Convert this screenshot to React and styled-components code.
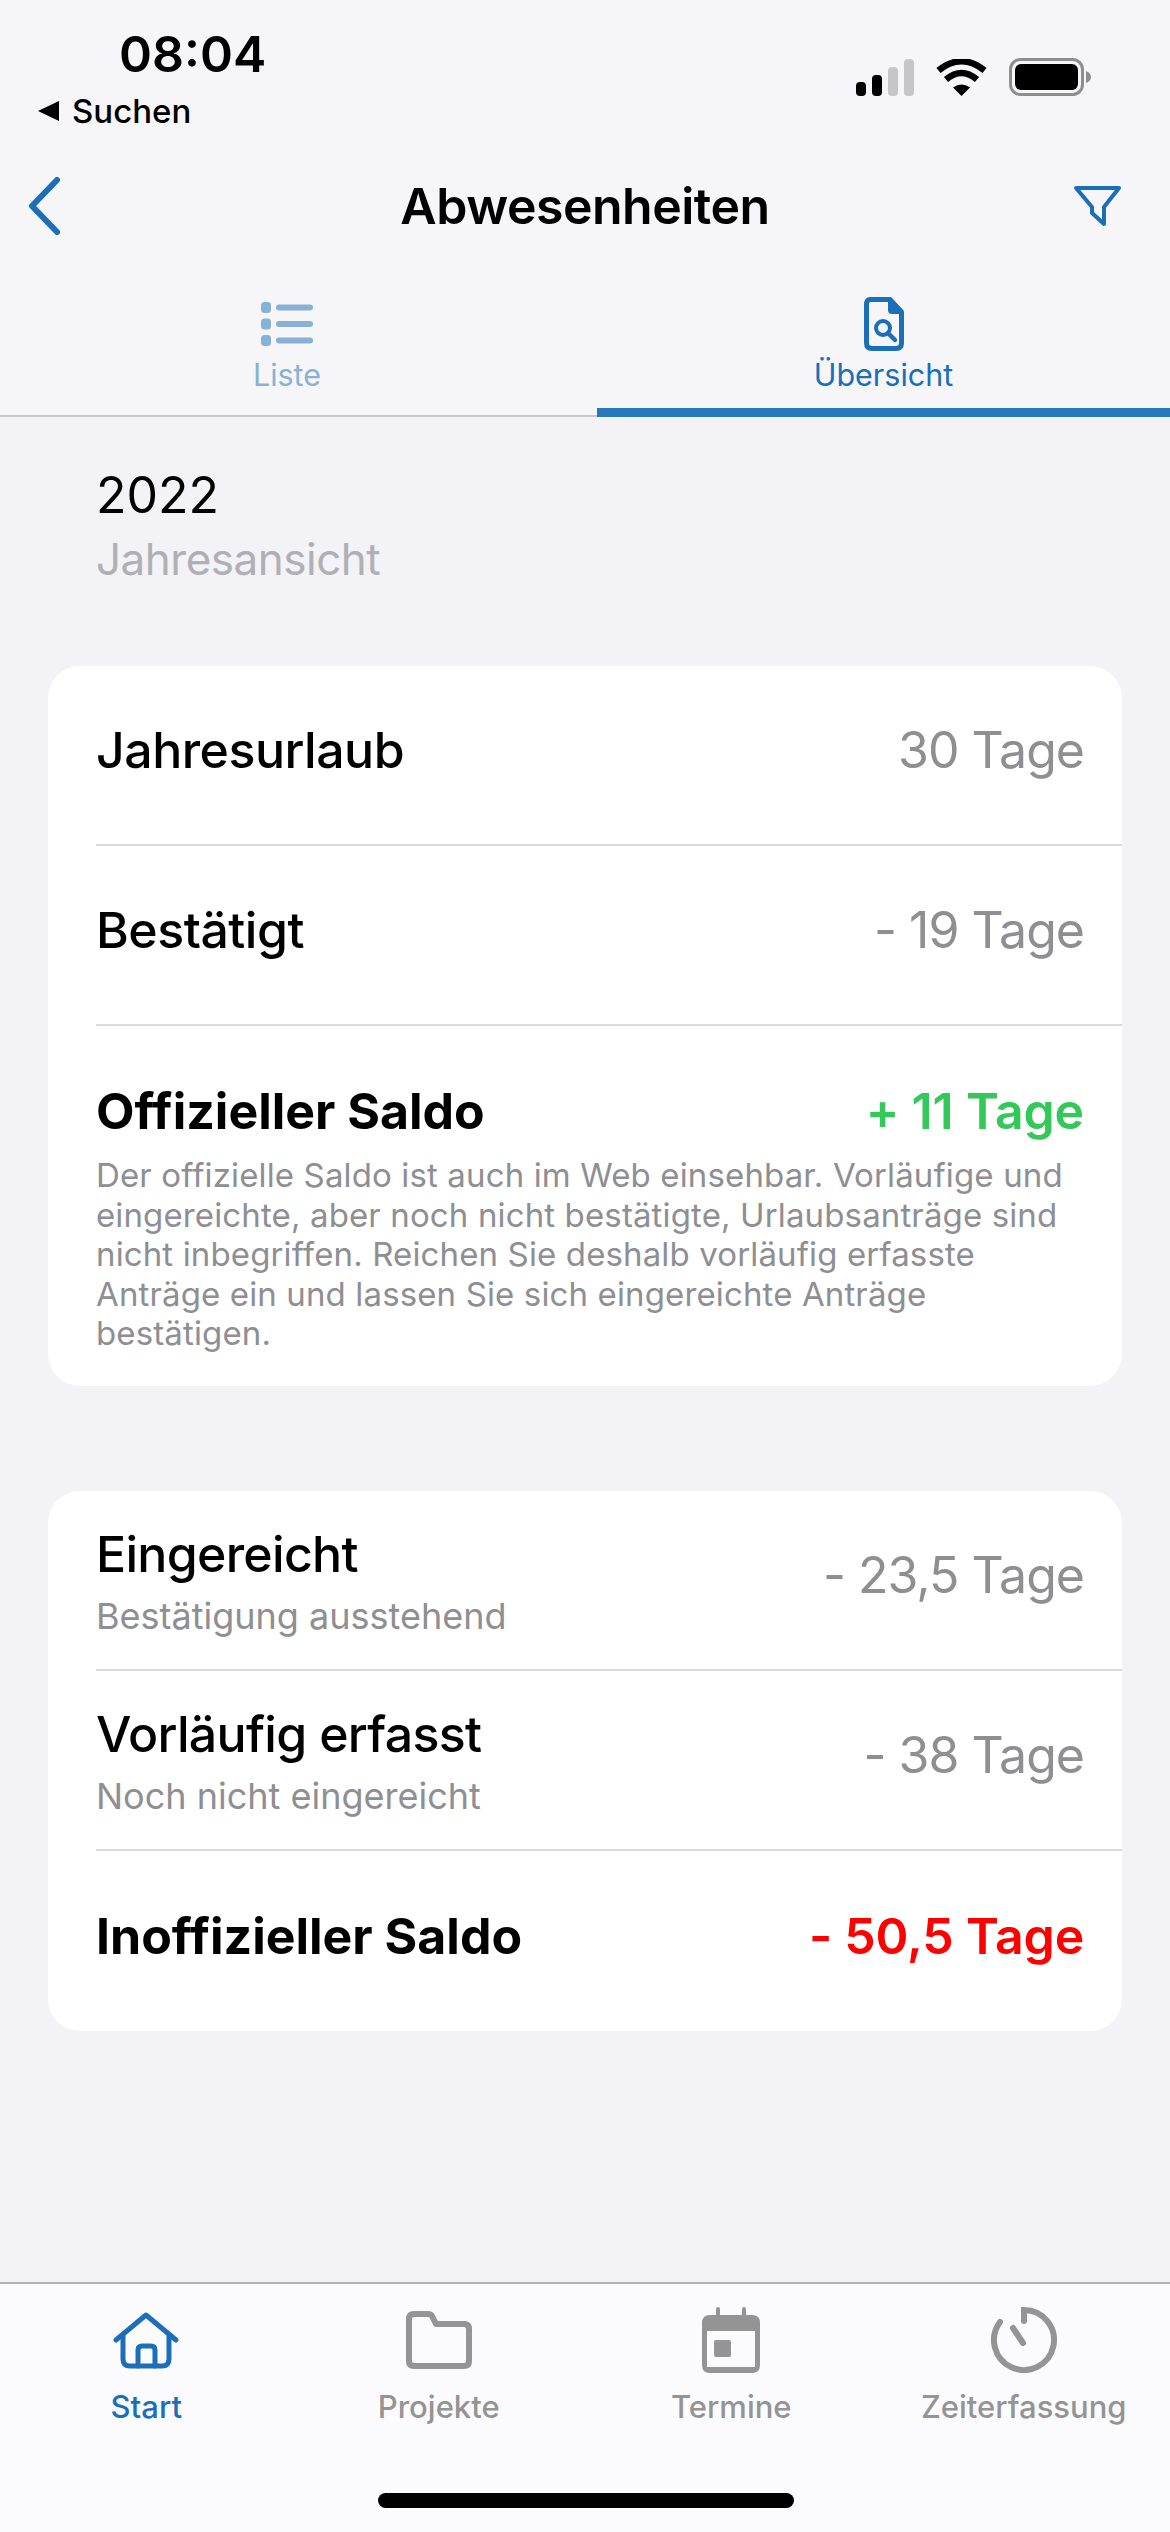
import React from 'react';
import styled, { createGlobalStyle } from 'styled-components';

const GlobalStyle = createGlobalStyle`
    html, body {
        margin: 0;
        padding: 0;
        background: #f2f2f7;
        font-family: Inter, "Liberation Sans", sans-serif;
        color: #000;
    }
`

const Screen = styled.div`
    width: 1170px;
    height: 2532px;
    display: flex;
    flex-direction: column;
    overflow: hidden;
`

const Header = styled.header`
    background: #f6f6f8;
`

const StatusBar = styled.div`
    height: 150px;
    box-sizing: border-box;
    display: flex;
    justify-content: space-between;
    padding: 26px 79px 0 38px;
`

const StatusLeft = styled.div`
    display: flex;
    flex-direction: column;
`

const Time = styled.div`
    font-size: 50px;
    font-weight: 600;
    line-height: 56px;
    margin-left: 81px;
`

const BackLink = styled.div`
    display: flex;
    align-items: center;
    gap: 12px;
    font-size: 33px;
    font-weight: 500;
    line-height: 44px;
    margin-top: 7px;
`

const StatusIcons = styled.div`
    display: flex;
    align-items: center;
    gap: 22px;
    height: 38px;
    margin-top: 32px;
`

const NavBar = styled.div`
    height: 112px;
    display: grid;
    grid-template-columns: 1fr auto 1fr;
    align-items: center;
    padding: 0 48px 0 28px;

    svg:last-child {
        justify-self: end;
    }
`

const NavTitle = styled.h1`
    margin: 0 0 0 20px;
    font-size: 50px;
    font-weight: 600;
    letter-spacing: -0.5px;
`

const Tabs = styled.div`
    display: flex;
    justify-content: space-between;
    height: 155px;
    box-sizing: border-box;
    border-bottom: 2px solid #c8c8cc;
`

const Tab = styled.div`
    width: ${p => (p.$active ? '573px' : '574px')};
    height: 155px;
    box-sizing: border-box;
    display: flex;
    flex-direction: column;
    align-items: center;
    padding-top: 35px;
    color: #1a6fb8;
    border-bottom: ${p => (p.$active ? '9px solid #2878bd' : 'none')};
    & > * {
        opacity: ${p => (p.$active ? 1 : 0.5)};
    }
`

const TabIcon = styled.div`
    height: 54px;
    display: flex;
    align-items: center;
`

const TabLabel = styled.div`
    font-size: 30.5px;
    line-height: 40px;
    margin-top: 4px;
`

const Content = styled.main`
    flex: 1;
    display: flex;
    flex-direction: column;
`

const YearBlock = styled.div`
    padding: 46px 0 0 96px;
`

const Year = styled.div`
    font-size: 50px;
    line-height: 64px;
`

const YearSub = styled.div`
    font-size: 44px;
    line-height: 64px;
    letter-spacing: -0.5px;
    color: #b0b0b4;
`

const Card = styled.section`
    margin: ${p => p.$top}px 48px 0;
    background: #fff;
    border-radius: 32px;
    padding-left: 48px;
`

const Row = styled.div`
    height: ${p => p.$height || 180}px;
    box-sizing: border-box;
    display: flex;
    align-items: center;
    justify-content: space-between;
    padding: 0 38px 10px 0;
    border-bottom: ${p => (p.$last ? 'none' : '2px solid #d9d9dc')};
`

const SaldoHead = styled(Row)`
    height: auto;
    padding: 0 38px 0 0;
    border-bottom: none;
`

const SaldoBlock = styled.div`
    padding: 48px 0 32px;
`

const RowLabel = styled.div`
    font-size: 50px;
    line-height: 74px;
    font-weight: ${p => (p.$strong ? 700 : 500)};
    letter-spacing: ${p => (p.$strong ? '0' : '-0.5px')};
`

const LabelBlock = styled.div`
    margin-top: 8px;
`

const TitleLabel = styled.div`
    font-size: 50px;
    line-height: 62px;
    font-weight: 500;
    letter-spacing: -0.7px;
`

const SubLabel = styled.div`
    font-size: 36px;
    line-height: 38px;
    margin-top: 12px;
    color: #8e8e93;
`

const RowValue = styled.div`
    font-size: 50px;
    font-weight: ${p => (p.$strong ? 600 : 400)};
    letter-spacing: ${p => (p.$strong ? '-0.2px' : '-1px')};
    color: ${p => p.$color || '#8e8e93'};
`

const Note = styled.p`
    margin: 8px 38px 0 0;
    font-size: 33px;
    line-height: 39.5px;
    letter-spacing: 0.13px;
    color: #8e8e93;
`

const BottomBar = styled.nav`
    height: 250px;
    box-sizing: border-box;
    border-top: 2px solid #b2b2b6;
    background: #fbfbfd;
    display: grid;
    grid-template-columns: repeat(4, 1fr);
    position: relative;
`

const BarItem = styled.div`
    display: flex;
    flex-direction: column;
    align-items: center;
    padding-top: 23px;
    color: ${p => (p.$active ? '#1a6fb8' : '#949494')};
`

const BarIcon = styled.div`
    height: 66px;
    display: flex;
    align-items: center;
`

const BarLabel = styled.div`
    font-size: 31px;
    font-weight: 500;
    line-height: 40px;
    margin-top: 14px;
`

const HomeIndicator = styled.div`
    position: absolute;
    left: 378px;
    top: 209px;
    width: 416px;
    height: 15px;
    border-radius: 8px;
    background: #000;
`

const SignalIcon = () => (
    <svg width="58" height="37" viewBox="0 0 58 37">
        <rect x="0" y="23" width="10" height="14" rx="4" fill="#000" />
        <rect x="16" y="16" width="10" height="21" rx="4" fill="#000" />
        <rect x="32" y="8" width="10" height="29" rx="4" fill="#c6c6c8" />
        <rect x="48" y="0" width="10" height="37" rx="4" fill="#c6c6c8" />
    </svg>
)

const WifiIcon = () => (
    <svg width="51" height="37" viewBox="0 0 51 37">
        <path d="M25.5 37 L17 28.5 Q25.5 22.5 34 28.5 Z" fill="#000" />
        <path d="M10 20.5 Q25.5 7.5 41 20.5" fill="none" stroke="#000" strokeWidth="6.5" />
        <path d="M2.5 11.5 Q25.5 -7 48.5 11.5" fill="none" stroke="#000" strokeWidth="6.5" />
    </svg>
)

const BatteryIcon = () => (
    <svg width="82" height="38" viewBox="0 0 82 38">
        <rect x="1.5" y="1.5" width="72" height="35" rx="10" fill="none" stroke="#8e8e8e" strokeWidth="3" />
        <rect x="6" y="6" width="63" height="26" rx="6" fill="#000" />
        <path d="M77 13 Q82 15 82 19 Q82 23 77 25 Z" fill="#8e8e8e" />
    </svg>
)

const BackTriangle = () => (
    <svg width="22" height="20" viewBox="0 0 22 20">
        <path d="M0 10 L21 0 V20 Z" fill="#000" />
    </svg>
)

const Chevron = () => (
    <svg width="32" height="58" viewBox="0 0 32 58">
        <path d="M29 3 L4 29 L29 55" fill="none" stroke="#1a6fb8" strokeWidth="6" strokeLinecap="round" strokeLinejoin="round" />
    </svg>
)

const FilterIcon = () => (
    <svg width="49" height="42" viewBox="0 0 49 42">
        <path d="M3 3 H46 L31 22 V39 L19 28 V22 Z" fill="none" stroke="#1a6fb8" strokeWidth="4" strokeLinejoin="round" />
    </svg>
)

const ListIcon = () => (
    <svg width="52" height="44" viewBox="0 0 52 44" fill="currentColor">
        <rect x="0" y="0" width="10" height="11" rx="3.5" />
        <rect x="15" y="2.5" width="37" height="6" rx="3" />
        <rect x="0" y="16.5" width="10" height="11" rx="3.5" />
        <rect x="15" y="19" width="37" height="6" rx="3" />
        <rect x="0" y="33" width="10" height="11" rx="3.5" />
        <rect x="15" y="35.5" width="37" height="6" rx="3" />
    </svg>
)

const DocSearchIcon = () => (
    <svg width="40" height="54" viewBox="0 0 40 54">
        <path d="M6 2.5 H26 L37.5 15 V46 Q37.5 51.5 32 51.5 H8 Q2.5 51.5 2.5 46 V8 Q2.5 2.5 6 2.5 Z" fill="none" stroke="currentColor" strokeWidth="5" strokeLinejoin="round" />
        <path d="M24 1 H27 L39 14 V17 H28 Q24 17 24 13 Z" fill="currentColor" />
        <circle cx="19" cy="31" r="7" fill="none" stroke="currentColor" strokeWidth="4" />
        <path d="M24 36 L31 43" fill="none" stroke="currentColor" strokeWidth="4.5" strokeLinecap="round" />
    </svg>
)

const HomeIcon = () => (
    <svg width="66" height="57" viewBox="0 0 66 57">
        <g fill="none" stroke="currentColor" strokeWidth="5" strokeLinecap="round" strokeLinejoin="round">
            <path d="M3 28 L33 3 L63 28" />
            <path d="M10 24 V47 Q10 54 17 54 H49 Q56 54 56 47 V24" />
            <path d="M25 54 V38 Q25 34 29 34 H38 Q42 34 42 38 V54" />
        </g>
    </svg>
)

const FolderIcon = () => (
    <svg width="66" height="58" viewBox="0 0 66 58">
        <path d="M3 8 Q3 3 8 3 H22 Q25 3 26 5 L30 13 H58 Q63 13 63 18 V50 Q63 55 58 55 H8 Q3 55 3 50 Z" fill="none" stroke="currentColor" strokeWidth="6" strokeLinejoin="round" />
    </svg>
)

const CalendarIcon = () => (
    <svg width="58" height="66" viewBox="0 0 58 66">
        <rect x="14" y="0" width="4" height="12" rx="2" fill="currentColor" />
        <rect x="40" y="0" width="4" height="12" rx="2" fill="currentColor" />
        <path d="M8 8 H50 Q58 8 58 16 V58 Q58 66 50 66 H8 Q0 66 0 58 V16 Q0 8 8 8 Z M5 24 V60 H53 V24 Z" fill="currentColor" fillRule="evenodd" />
        <rect x="12" y="33" width="17" height="17" rx="2" fill="currentColor" />
    </svg>
)

const TimerIcon = () => (
    <svg width="66" height="66" viewBox="0 0 66 66">
        <g fill="none" stroke="currentColor" strokeWidth="6" strokeLinecap="round">
            <path d="M33 14 V3 A30 30 0 1 1 9 15" />
            <path d="M22 21 L32 36" />
        </g>
    </svg>
)

const tabs = [
    { label: 'Start', icon: <HomeIcon />, active: true },
    { label: 'Projekte', icon: <FolderIcon /> },
    { label: 'Termine', icon: <CalendarIcon /> },
    { label: 'Zeiterfassung', icon: <TimerIcon /> },
]

const App = () => {
    return (
        <Screen>
            <GlobalStyle />
            <Header>
                <StatusBar>
                    <StatusLeft>
                        <Time>08:04</Time>
                        <BackLink><BackTriangle />Suchen</BackLink>
                    </StatusLeft>
                    <StatusIcons>
                        <SignalIcon />
                        <WifiIcon />
                        <BatteryIcon />
                    </StatusIcons>
                </StatusBar>
                <NavBar>
                    <Chevron />
                    <NavTitle>Abwesenheiten</NavTitle>
                    <FilterIcon />
                </NavBar>
                <Tabs>
                    <Tab>
                        <TabIcon><ListIcon /></TabIcon>
                        <TabLabel>Liste</TabLabel>
                    </Tab>
                    <Tab $active>
                        <TabIcon><DocSearchIcon /></TabIcon>
                        <TabLabel>Übersicht</TabLabel>
                    </Tab>
                </Tabs>
            </Header>
            <Content>
                <YearBlock>
                    <Year>2022</Year>
                    <YearSub>Jahresansicht</YearSub>
                </YearBlock>
                <Card $top={75}>
                    <Row>
                        <RowLabel>Jahresurlaub</RowLabel>
                        <RowValue>30 Tage</RowValue>
                    </Row>
                    <Row>
                        <RowLabel>Bestätigt</RowLabel>
                        <RowValue>- 19 Tage</RowValue>
                    </Row>
                    <SaldoBlock>
                        <SaldoHead as="div">
                            <RowLabel $strong>Offizieller Saldo</RowLabel>
                            <RowValue $strong $color="#34c759">+ 11 Tage</RowValue>
                        </SaldoHead>
                        <Note>
                            Der offizielle Saldo ist auch im Web einsehbar. Vorläufige und<br />
                            eingereichte, aber noch nicht bestätigte, Urlaubsanträge sind<br />
                            nicht inbegriffen. Reichen Sie deshalb vorläufig erfasste<br />
                            Anträge ein und lassen Sie sich eingereichte Anträge<br />
                            bestätigen.
                        </Note>
                    </SaldoBlock>
                </Card>
                <Card $top={105}>
                    <Row>
                        <LabelBlock>
                            <TitleLabel>Eingereicht</TitleLabel>
                            <SubLabel>Bestätigung ausstehend</SubLabel>
                        </LabelBlock>
                        <RowValue>- 23,5 Tage</RowValue>
                    </Row>
                    <Row>
                        <LabelBlock>
                            <TitleLabel>Vorläufig erfasst</TitleLabel>
                            <SubLabel>Noch nicht eingereicht</SubLabel>
                        </LabelBlock>
                        <RowValue>- 38 Tage</RowValue>
                    </Row>
                    <Row $last>
                        <RowLabel $strong>Inoffizieller Saldo</RowLabel>
                        <RowValue $strong $color="#ff0000">- 50,5 Tage</RowValue>
                    </Row>
                </Card>
            </Content>
            <BottomBar>
                {tabs.map(tab => (
                    <BarItem key={tab.label} $active={tab.active}>
                        <BarIcon>{tab.icon}</BarIcon>
                        <BarLabel>{tab.label}</BarLabel>
                    </BarItem>
                ))}
                <HomeIndicator />
            </BottomBar>
        </Screen>
    )
}

export default App;
